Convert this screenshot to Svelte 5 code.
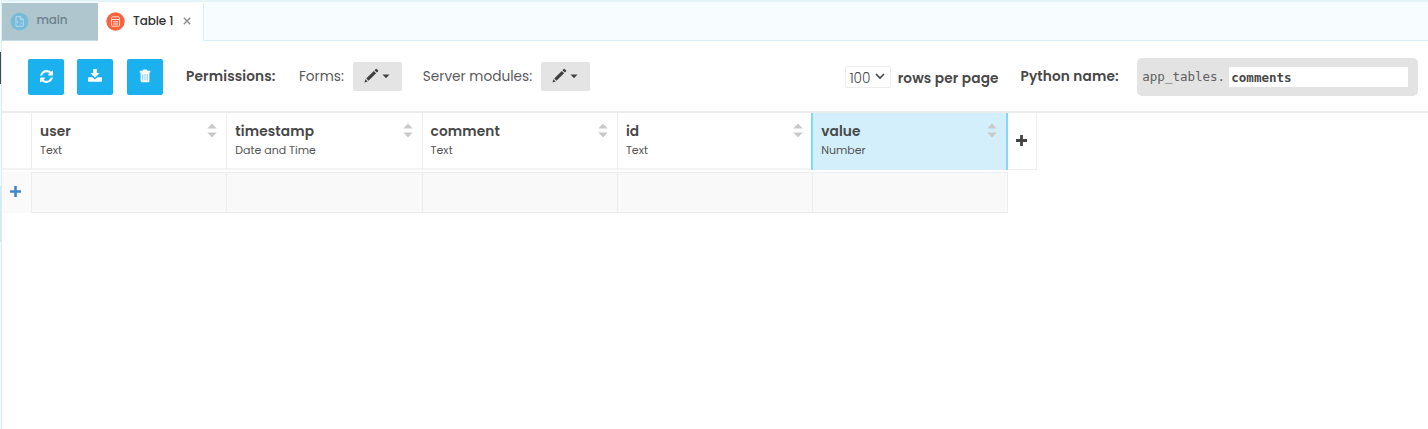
<script>
  const columns = [
    { name: 'user', type: 'Text' },
    { name: 'timestamp', type: 'Date and Time' },
    { name: 'comment', type: 'Text' },
    { name: 'id', type: 'Text' },
    { name: 'value', type: 'Number', selected: true }
  ];
</script>

{#snippet pencil()}
  <svg class="pencil" width="15" height="15" viewBox="0 0 15 15">
    <path d="M.5 14.500L1.400 11.300L3.700 13.600ZM2.200 10.500L9.800 2.900L12.100 5.200L4.500 12.800ZM10.500 2.200L11.700 1Q12.200.5 12.700 1L14 2.300Q14.500 2.900 14 3.400L12.800 4.500Z" />
  </svg>
  <svg class="caret" width="8" height="5" viewBox="0 0 8 5"><path d="M0.5 0.5H7.5L4 4.2Z" /></svg>
{/snippet}

<div class="app">
  <div class="rail"><i class="dark"></i><i class="blue"></i></div>
  <div class="pane">
    <nav class="tabs">
      <div class="tab idle">
        <svg class="badge" width="19" height="19" viewBox="0 0 19 19">
          <circle cx="9.5" cy="9.5" r="9" fill="#78bbd8" />
          <path d="M6 4.7H10.5L13.2 7.4V14.3H6ZM10.3 4.7V7.6H13.2M8.2 9L7.2 10L8.2 11M10.6 10.2L11.6 11.2L10.6 12.2" fill="none" stroke="#b5dbea" />
        </svg>
        <span class="t-main">main</span>
      </div>
      <div class="tab active">
        <svg class="badge" width="19" height="19" viewBox="0 0 19 19">
          <circle cx="9.5" cy="9.5" r="9.2" fill="#fb633e" />
          <rect x="5.500" y="4.800" width="8" height="9.400" rx="1.200" fill="#fb633e" stroke="#ffe0d7" />
          <path d="M6 7.500H13M7 9.800H12M7 12H12" stroke="#ffe6de" stroke-width="1" />
        </svg>
        <span class="t-table">Table 1</span>
        <svg class="close" width="8" height="8" viewBox="0 0 8 8"><path d="M.8.8L7.2 7.2M7.2.8L.8 7.2" stroke="#8c8c8c" stroke-width="1.4" /></svg>
      </div>
      <div class="rest"></div>
    </nav>

    <div class="toolbar">
      <button class="act" aria-label="Refresh">
        <svg class="refresh" width="13" height="13" viewBox="0 0 1536 1536"><path fill="#fff" d="M1511 928q0 5-1 7-64 268-268 434.500T764 1536q-146 0-282.500-55T238 1324l-129 129q-19 19-45 19t-45-19-19-45V960q0-26 19-45t45-19h448q26 0 45 19t19 45-19 45l-137 137q71 66 161 102t187 36q134 0 250-65t186-179q11-17 53-117 8-23 30-23h192q13 0 22.500 9.500t9.500 22.500zM1536 128v448q0 26-19 45t-45 19h-448q-26 0-45-19t-19-45 19-45l138-138Q969 256 768 256q-134 0-250 65T332 500q-11 17-53 117-8 23-30 23H50q-13 0-22.500-9.500T18 608v-7q65-268 270-434.500T768 0q146 0 284 55.500T1297 212l130-129q19-19 45-19t45 19 19 45z" /></svg>
      </button>
      <button class="act" aria-label="Download">
        <svg width="14" height="13" viewBox="0 0 14 13"><path fill="#fff" d="M5.2 0H8.8V4H11.6L7 8.7L2.4 4H5.2ZM.8 8.2H4.4L7 10.4L9.6 8.2H13.2Q14 8.2 14 9V12Q14 12.8 13.2 12.8H.8Q0 12.8 0 12V9Q0 8.200.8 8.2Z" /></svg>
      </button>
      <button class="act" aria-label="Delete">
        <svg width="12" height="14" viewBox="0 0 12 14"><path fill="#fff" d="M3.8 1.800V1Q3.800.4 4.500.4H7.500Q8.200.4 8.200 1V1.800H11.300V3.400H10.400V12Q10.400 13.200 9.200 13.200H2.800Q1.600 13.200 1.600 12V3.400H.7V1.800Z" /><path d="M3.8 5V11.400M6 5V11.400M8.200 5V11.400" stroke="#83cff3" stroke-width="1" /></svg>
      </button>
      <b class="perm">Permissions:</b>
      <span class="forms">Forms:</span>
      <button class="drop" aria-label="Edit form permissions">{@render pencil()}</button>
      <span class="server">Server modules:</span>
      <button class="drop" aria-label="Edit server permissions">{@render pencil()}</button>
      <div class="pager">
        <div class="select"><span>100</span><svg width="10" height="7" viewBox="0 0 10 7"><path d="M1 1L5 5L9 1" fill="none" stroke="#444" stroke-width="1.6" /></svg></div>
        <b class="rows">rows per page</b>
      </div>
      <b class="python">Python name:</b>
      <div class="code"><span>app_tables.</span><div class="field">comments</div></div>
    </div>

    <div class="head">
      <div class="corner"></div>
      {#each columns as c}
        <div class="col" class:selected={c.selected}>
          <b>{c.name}</b>
          <small>{c.type}</small>
          <svg class="sort" width="10" height="15" viewBox="0 0 10 15"><path d="M.3 5.500L5 .5L9.700 5.500ZM.3 9.500H9.700L5 14.500Z" /></svg>
        </div>
      {/each}
      <div class="addcol"><svg width="11" height="11" viewBox="0 0 11 11"><path d="M5.500 0V11M0 5.500H11" stroke="#444" stroke-width="2.800" /></svg></div>
    </div>
    <div class="row">
      <div class="addrow"><svg width="11" height="11" viewBox="0 0 11 11"><path d="M5.500 0V11M0 5.500H11" stroke="#4185ca" stroke-width="2.600" /></svg></div>
      {#each columns as c}<div class="cell"></div>{/each}
    </div>
  </div>
</div>

<style>
  .app { display: flex; width: 1428px; height: 429px; overflow: hidden; background: #fff; color: #484848; font: 13.700px Poppins, Inter, sans-serif; }
  .app :global(*) { box-sizing: border-box; }
  b { font-weight: 600; letter-spacing: .13px; }
  span, b, small { white-space: nowrap; }
  svg { display: block; flex: none; }
  .rail { width: 2px; flex: none; border-right: 1px solid #d9edf3; background: #f5fbfd; display: flex; flex-direction: column; }
  .rail i { width: 1px; }
  .dark { height: 32px; margin-top: 52px; background: #454950; }
  .blue { height: 56px; margin-top: 102px; background: #d3e9f0; }
  .pane { width: 1426px; flex: none; }
  .tabs { display: flex; height: 41px; border-top: 2px solid #e5f4f9; background: #f6fcff; padding-top: 1px; }
  .tab { display: flex; align-items: center; font-size: 12px; }
  .idle { width: 96px; background: #afc6cf; padding: 0 0 1px 7.500px; color: #6d838d; border-bottom: 1px solid #c4dce5; }
  .active { width: 106px; background: #fff; padding: 0 0 1px 8px; border-right: 1px solid #d9edf4; font-weight: 500; }
  .rest { flex: 1; border-bottom: 1px solid #d9edf4; }
  .t-main { margin: -2px 0 0 8px; font-weight: 500; letter-spacing: -.2px; }
  .t-table { margin: -2px 0 0 8px; width: 42px; color: #333; letter-spacing: -.1px; }
  .close { margin: -1px 0 0 8px; }
  .toolbar { display: flex; align-items: center; height: 72px; padding: 0 10px 0 26px; border-bottom: 2px solid #ebeded; }
  button { border: 0; padding: 0; display: flex; align-items: center; justify-content: center; }
  .act { width: 36px; height: 36px; border-radius: 2px; background: #1bb0ee; margin: 1px 13.400px 0 0; }
  .act svg { margin-top: -2px; }
  .act .refresh { margin: 0 0 0 1px; }
  .perm { margin-left: 10px; width: 113px; margin-top: 1px; }
  .forms { width: 54px; margin-top: 1px; color: #5a5a5a; }
  .server { width: 118px; margin-left: 21px; margin-top: 1px; color: #5a5a5a; }
  .drop { width: 49px; height: 29px; margin-top: 1px; background: #e4e4e4; border-radius: 2px; gap: 3px; fill: #404040; }
  .pencil { margin-top: -3px; }
  .pager { display: flex; align-items: center; margin: 1px 0 0 255px; width: 176px; }
  .select { display: flex; align-items: center; gap: 4px; border: 1px solid #ececec; border-radius: 2px; width: 46px; height: 22px; padding-left: 4px; }
  .select span { width: 21px; color: #444; padding-top: 4px; font-weight: 300; }
  .select svg { margin-top: -1px; }
  .rows { margin-left: 7px; margin-top: 5px; }
  .python { width: 117px; margin-top: 1px; }
  .code { display: flex; align-items: center; width: 281px; height: 38px; margin-top: 2px; border-radius: 5px; background: #e3e3e3; padding-left: 5px; font: 12.500px "DejaVu Sans Mono", monospace; }
  .code span { width: 87px; margin-top: -1px; color: #606060; }
  .field { width: 179px; height: 20px; background: #fff; padding-left: 2px; font-weight: 700; line-height: 21px; }
  .head { display: flex; height: 57px; }
  .corner { width: 29px; flex: none; border-bottom: 2px solid #f3f3f3; }
  .col { width: 195.300px; flex: none; border-left: 1px solid #ededed; border-bottom: 2px solid #f3f3f3; padding: 8px 9px 0 8px; display: grid; grid-template-columns: 1fr 10px; grid-template-rows: 20px 20px; }
  .col b { line-height: 22px; }
  .col small { grid-row: 2; font-size: 11px; line-height: 19px; color: #555; }
  .sort { grid-row: 1; grid-column: 2; fill: #c9c9c9; margin-top: 2px; }
  .selected { width: 197px; margin-left: -1px; background: #d3effc; border-left: 2px solid #80d8fa; border-right: 2px solid #80d8fa; border-bottom: 0; }
  .addcol { width: 29px; border-right: 1px solid #eee; border-bottom: 1px solid #eee; display: flex; align-items: center; justify-content: center; padding: 0 1px 1px 0; }
  .row { display: flex; height: 43px; width: 1006px; padding-top: 2px; }
  .addrow { width: 29px; flex: none; background: #fafafa; display: flex; align-items: center; justify-content: center; padding: 0 2px 2px 0; }
  .cell { width: 195.300px; flex: none; background: #f9f9f9; border-left: 1px solid #ededed; border-top: 1px solid #ededed; border-bottom: 1px solid #ededed; }
  .cell:last-child { width: 196px; border-right: 1px solid #ededed; }
</style>
